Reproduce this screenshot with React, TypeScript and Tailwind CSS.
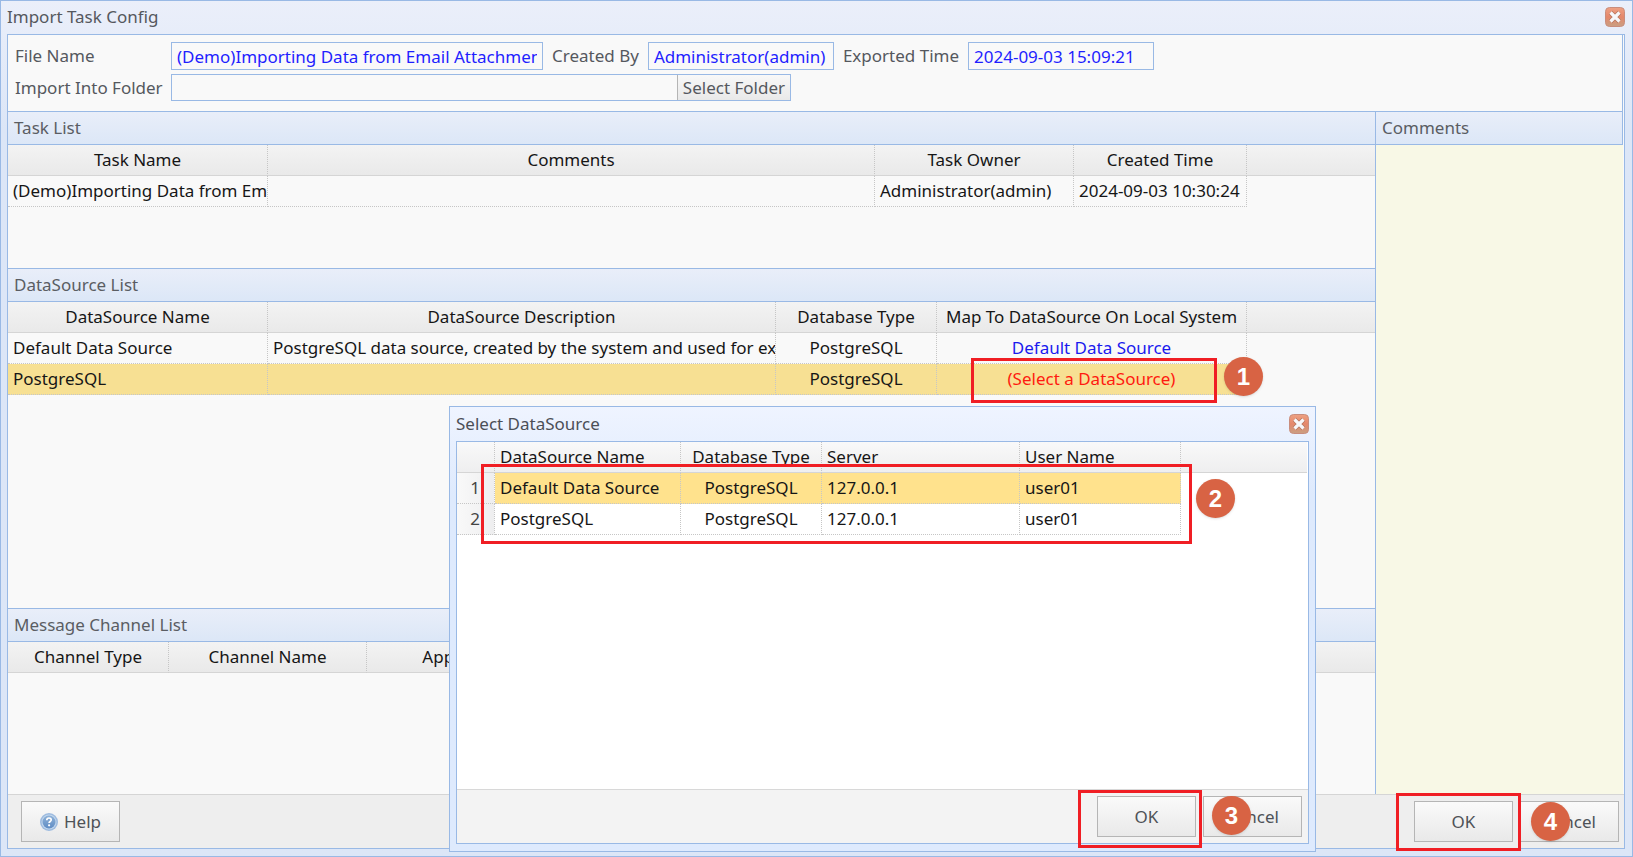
import type { ReactNode } from "react";
import clsx from "clsx";

type Align = "left" | "center" | "right";

interface Column {
    title: string;
    width: string;
    align?: Align;
    headAlign?: Align;
}

interface Cell {
    text: string;
    color?: string;
}

const alignClass: Record<Align, string> = {
    left: "text-left",
    center: "text-center",
    right: "text-right",
};

function CloseButton(props: { label: string }) {
    return (
        <button type="button" aria-label={props.label} className="size-5 cursor-pointer">
            <svg viewBox="0 0 20 20" className="size-5">
                <defs>
                    <linearGradient id="close-fill" x1="0" y1="0" x2="0" y2="1">
                        <stop offset="0" stopColor="#eda184" />
                        <stop offset="0.5" stopColor="#e5876b" />
                        <stop offset="1" stopColor="#c9a083" />
                    </linearGradient>
                </defs>
                <rect x="0.5" y="0.5" width="19" height="19" rx="4" fill="url(#close-fill)" stroke="#c98d7d" />
                <path d="M5.5 5.500l9 9M14.500 5.500l-9 9" stroke="#b5745c" strokeWidth="4.600" />
                <path d="M5.500 5.500l9 9M14.500 5.500l-9 9" stroke="#f7f7fa" strokeWidth="3.200" />
            </svg>
        </button>
    );
}

function HelpIcon() {
    return (
        <svg viewBox="0 0 18 18" className="size-[18px]">
            <defs>
                <linearGradient id="help-fill" x1="0" y1="0" x2="0" y2="1">
                    <stop offset="0" stopColor="#8fb2d8" />
                    <stop offset="1" stopColor="#5f8cc4" />
                </linearGradient>
            </defs>
            <circle cx="9" cy="9" r="9" fill="#9dbbe0" />
            <circle cx="9" cy="9" r="7.500" fill="#c3d7ec" />
            <circle cx="9" cy="9" r="6.500" fill="url(#help-fill)" />
            <path d="M6.8 7.200c0-3 4.600-2.800 4.400-.2-.1 1.500-2.100 1.500-2.100 3" fill="none" stroke="#fff" strokeWidth="1.700" />
            <circle cx="9.100" cy="12.300" r="1.100" fill="#fff" />
        </svg>
    );
}

function Grid(props: { label: string; columns: Column[]; rows: Cell[][]; selected?: number; numbered?: boolean; bright?: boolean }) {
    const { columns, rows, selected, numbered, bright } = props;
    return (
        <table aria-label={props.label} className="w-full table-fixed border-separate border-spacing-0 text-[#161616]">
            <colgroup>
                {columns.map((col, i) => (
                    <col key={i} className={col.width} />
                ))}
                <col />
            </colgroup>
            <thead>
                <tr className={clsx("h-[31px] bg-linear-to-b", bright ? "from-[#f9f9f9] to-[#eeeeef]" : "from-[#f3f3f3] to-[#e9e9e9]")}>
                    {columns.map((col, i) => (
                        <th
                            key={i}
                            className={clsx(
                                "h-[31px] overflow-hidden border-r border-b border-r-[#c6c6c6] border-b-[#d5d5d5] px-[5px] font-normal whitespace-nowrap [border-right-style:dotted]",
                                alignClass[col.headAlign ?? "center"]
                            )}
                        >
                            {col.title}
                        </th>
                    ))}
                    <td className="border-b border-[#d5d5d5]" />
                </tr>
            </thead>
            <tbody>
                {rows.map((row, r) => (
                    <tr key={r}>
                        {row.map((cell, c) => (
                            <td
                                key={c}
                                className={clsx(
                                    "h-[31px] overflow-hidden border-r border-b border-dotted border-[#c6c6c6] whitespace-nowrap",
                                    alignClass[columns[c].align ?? "left"],
                                    numbered && c === 0 ? "bg-linear-to-r from-[#f9f9f9] to-[#eeeeef] pr-[14px] text-[#444]" : "pl-[5px]",
                                    columns[c].align === "center" && "pr-[5px]",
                                    r === selected && !(numbered && c === 0) && (bright ? "bg-[#ffe28d]" : "bg-[#f7e093]"),
                                    cell.color
                                )}
                            >
                                {cell.text}
                            </td>
                        ))}
                        <td />
                    </tr>
                ))}
            </tbody>
        </table>
    );
}

function Section(props: { title: string; className?: string; children?: ReactNode }) {
    return (
        <section className={clsx("relative flex flex-col", props.className)}>
            <h2 className="h-[34px] shrink-0 border-y border-[#99b9e5] bg-linear-to-b from-[#e9eef9] to-[#dce7f7] px-[6px] leading-8 text-[#5a5d63]">
                {props.title}
            </h2>
            {props.children}
        </section>
    );
}

function DialogButton(props: { children: ReactNode }) {
    return (
        <button
            type="button"
            className="flex h-[41px] w-[99px] cursor-pointer items-center justify-center gap-[6px] border border-[#b5b5b5] bg-linear-to-b from-[#fafafa] to-[#e9e9e9] text-[#4e5257]"
        >
            {props.children}
        </button>
    );
}

function Field(props: { id: string; label: string; value: string; className: string }) {
    return (
        <>
            <label htmlFor={props.id} className="whitespace-nowrap">{props.label}</label>
            <input
                id={props.id}
                readOnly
                defaultValue={props.value}
                className={clsx("h-7 border border-[#99b9e5] px-[5px] text-[#1f1fff] outline-none", props.className)}
            />
        </>
    );
}

// numbered callouts drawn on top of the windows
function Marker(props: { n: number; className: string }) {
    return (
        <span
            className={clsx(
                "absolute z-30 flex size-[39px] items-center justify-center rounded-full bg-[#d86344] font-['Liberation_Sans',sans-serif] text-2xl font-bold text-white shadow-sm",
                props.className
            )}
        >
            {props.n}
        </span>
    );
}

function Frame(props: { className: string }) {
    return <span className={clsx("pointer-events-none absolute z-20 border-3 border-[#f01e24]", props.className)} />;
}

const taskColumns: Column[] = [
    { title: "Task Name", width: "w-[260px]" },
    { title: "Comments", width: "w-[607px]" },
    { title: "Task Owner", width: "w-[199px]" },
    { title: "Created Time", width: "w-[173px]" },
];

const taskRows: Cell[][] = [
    [
        { text: "(Demo)Importing Data from Email Attachments" },
        { text: "" },
        { text: "Administrator(admin)" },
        { text: "2024-09-03 10:30:24" },
    ],
];

const sourceColumns: Column[] = [
    { title: "DataSource Name", width: "w-[260px]" },
    { title: "DataSource Description", width: "w-[508px]" },
    { title: "Database Type", width: "w-[161px]", align: "center" },
    { title: "Map To DataSource On Local System", width: "w-[310px]", align: "center" },
];

const sourceRows: Cell[][] = [
    [
        { text: "Default Data Source" },
        { text: "PostgreSQL data source, created by the system and used for extraction" },
        { text: "PostgreSQL" },
        { text: "Default Data Source", color: "text-[#1a1aee]" },
    ],
    [
        { text: "PostgreSQL" },
        { text: "" },
        { text: "PostgreSQL" },
        { text: "(Select a DataSource)", color: "text-[#ff1a10]" },
    ],
];

const channelColumns: Column[] = [
    { title: "Channel Type", width: "w-[161px]" },
    { title: "Channel Name", width: "w-[198px]" },
    { title: "App ID", width: "w-[166px]" },
];

const pickerColumns: Column[] = [
    { title: "", width: "w-[38px]", align: "right" },
    { title: "DataSource Name", width: "w-[186px]", headAlign: "left" },
    { title: "Database Type", width: "w-[141px]", align: "center" },
    { title: "Server", width: "w-[198px]", headAlign: "left" },
    { title: "User Name", width: "w-[161px]", headAlign: "left" },
];

const pickerRows: Cell[][] = [
    [{ text: "1" }, { text: "Default Data Source" }, { text: "PostgreSQL" }, { text: "127.0.0.1" }, { text: "user01" }],
    [{ text: "2" }, { text: "PostgreSQL" }, { text: "PostgreSQL" }, { text: "127.0.0.1" }, { text: "user01" }],
];

function SelectDataSource() {
    return (
        <div
            role="dialog"
            aria-label="Select DataSource"
            className="absolute top-[405px] left-[448px] z-10 flex h-[446px] w-[867px] flex-col border border-[#99b9e5] bg-linear-to-b from-[#eff4ff] to-[#deeafd] to-20% px-[6px] pb-[7px]"
        >
            <header className="flex h-[34px] shrink-0 items-center justify-between">
                <h2 className="text-[#4b4f57]">Select DataSource</h2>
                <CloseButton label="Close data source selection" />
            </header>
            <div className="flex flex-1 flex-col border border-[#99b9e5] bg-white">
                <div className="mr-[1px] flex-1">
                    <Grid label="Data sources" columns={pickerColumns} rows={pickerRows} selected={0} numbered bright />
                </div>
                <footer className="flex h-[54px] items-start justify-end gap-[7px] border-t border-[#d8d8d8] bg-[#f3f3f3] pt-[6px] pr-[6px]">
                    <DialogButton>OK</DialogButton>
                    <DialogButton>Cancel</DialogButton>
                </footer>
            </div>
            <Frame className="top-[57px] left-[31px] h-[80px] w-[711px]" />
            <Marker n={2} className="top-[72px] left-[746px]" />
            <Frame className="right-[113px] bottom-[3px] h-[58px] w-[124px]" />
            <Marker n={3} className="right-[64px] bottom-[16px]" />
        </div>
    );
}

export default function App() {
    return (
        <main className="relative flex h-screen min-h-[857px] min-w-[1400px] flex-col border border-[#99b9e5] bg-linear-to-b from-[#ebeffa] to-[#dce6f7] to-15% pr-[7px] pb-[7px] pl-[6px] font-['Noto_Sans','Noto_Sans_CJK_SC',sans-serif] text-[17px] leading-6 text-[#55585e]">
            <header className="flex h-[33px] shrink-0 items-center justify-between pb-[2px]">
                <h1>Import Task Config</h1>
                <CloseButton label="Close import task config" />
            </header>

            <div className="flex flex-1 flex-col border border-[#99b9e5] bg-[#f9f9f9]">
                <div className="mr-[1px] flex flex-1 flex-col">
                    <form className="flex h-[76px] flex-col gap-1 border-r border-[#99b9e5] px-[7px] pt-[7px]">
                        <div className="flex items-center">
                            <label htmlFor="file-name" className="w-[156px]">File Name</label>
                            <input
                                id="file-name"
                                readOnly
                                defaultValue="(Demo)Importing Data from Email Attachments"
                                className="mr-[9px] h-7 w-[372px] border border-[#99b9e5] px-[5px] text-[#1f1fff] outline-none"
                            />
                            <div className="flex items-center gap-[9px]">
                                <Field id="created-by" label="Created By" value="Administrator(admin)" className="w-[186px]" />
                                <Field id="exported-time" label="Exported Time" value="2024-09-03 15:09:21" className="w-[186px]" />
                            </div>
                        </div>
                        <div className="flex items-center">
                            <label htmlFor="folder" className="w-[156px]">Import Into Folder</label>
                            <div className="flex h-[27px] w-[620px] border border-[#99b9e5]">
                                <input id="folder" className="min-w-0 flex-1 px-[5px] outline-none" />
                                <button type="button" className="cursor-pointer border-l border-[#b5b5b5] bg-linear-to-b from-[#f8f8f8] to-[#e9e9e9] px-[5px] leading-6 whitespace-nowrap">
                                    Select Folder
                                </button>
                            </div>
                        </div>
                    </form>

                    <div className="flex flex-1">
                        <div className="flex flex-1 flex-col">
                            <Section title="Task List" className="h-[157px]">
                                <Grid label="Task List" columns={taskColumns} rows={taskRows} />
                            </Section>
                            <Section title="DataSource List" className="flex-1">
                                <Grid label="DataSource List" columns={sourceColumns} rows={sourceRows} selected={1} />
                                <Frame className="top-[90px] left-[963px] h-[45px] w-[246px]" />
                                <Marker n={1} className="top-[89px] left-[1216px]" />
                            </Section>
                            <Section title="Message Channel List" className="h-[186px]">
                                <Grid label="Message Channel List" columns={channelColumns} rows={[]} />
                            </Section>
                        </div>
                        <aside className="flex w-[248px] flex-col border-l border-[#99b9e5]">
                            <Section title="Comments" className="flex-1 bg-[#f8f8e6] [&>h2]:border-r" />
                        </aside>
                    </div>
                </div>

                <footer className="relative flex h-[54px] shrink-0 items-start border-t border-[#d5d5d5] bg-[#eeeeee] pt-[6px] pr-[5px] pl-[13px]">
                    <DialogButton>
                        <HelpIcon />
                        Help
                    </DialogButton>
                    <div className="ml-auto flex gap-[7px]">
                        <DialogButton>OK</DialogButton>
                        <DialogButton>Cancel</DialogButton>
                    </div>
                    <Frame className="right-[103px] bottom-[-3px] h-[58px] w-[125px]" />
                    <Marker n={4} className="right-[54px] bottom-[7px]" />
                </footer>
            </div>

            <SelectDataSource />
        </main>
    );
}
